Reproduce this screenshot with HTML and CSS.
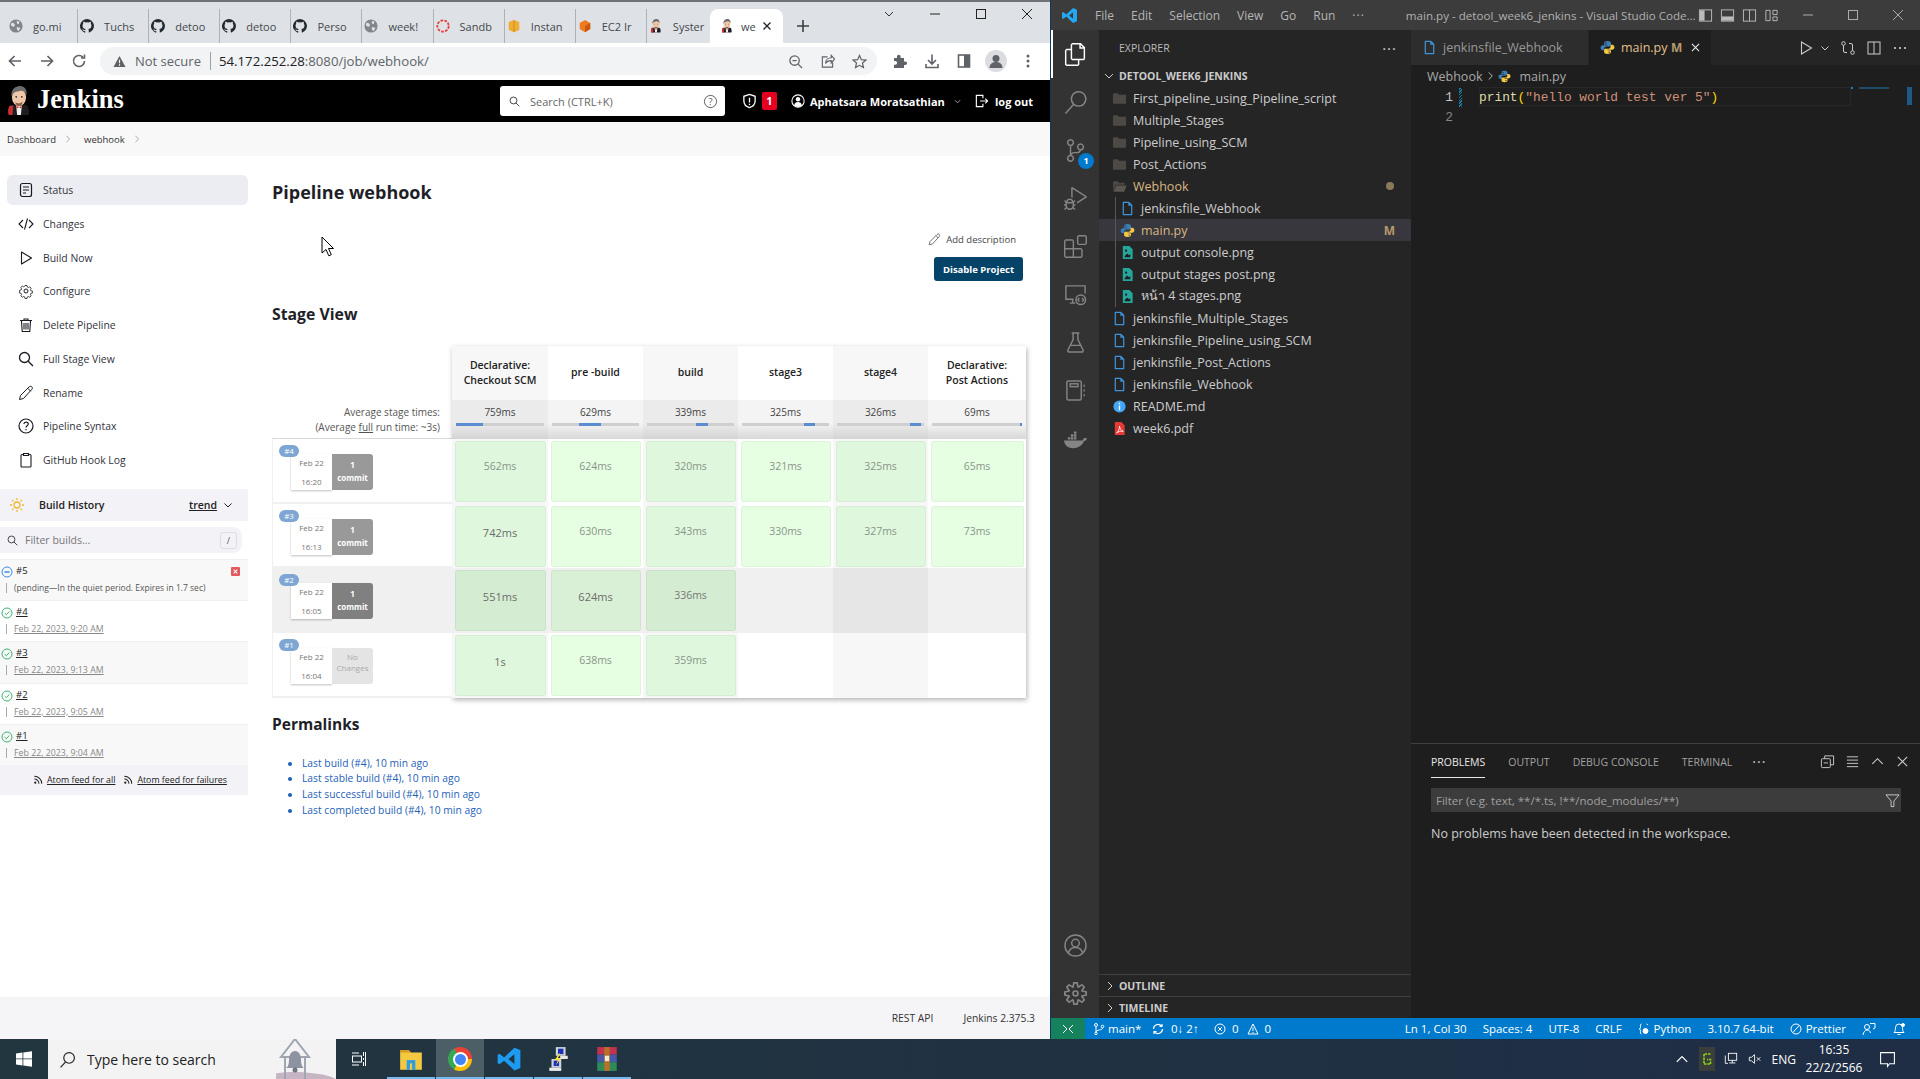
FILE: index.html
```html
<!DOCTYPE html>
<html lang="en">
<head>
<meta charset="utf-8">
<title>Jenkins and VS Code</title>
<link rel="stylesheet" href="styles.css">
</head>
<body>
<svg class="defs" width="0" height="0" aria-hidden="true">
  <symbol id="i-globe" viewBox="0 0 16 16"><circle cx="8" cy="8" r="7.5" fill="#80868b"/><path d="M3 4l3 1 1 2-2 2-3-2zM9 2l3 1-1 3-2-1zM9 9l4 1-2 4-2-2z" fill="#dee1e6"/></symbol>
  <symbol id="i-gh" viewBox="0 0 16 16"><path fill="#24292f" d="M8 0a8 8 0 0 0-2.53 15.59c.4.07.55-.17.55-.38v-1.4c-2.23.48-2.7-1.07-2.7-1.07-.36-.92-.89-1.17-.89-1.17-.73-.5.05-.49.05-.49.8.06 1.23.83 1.23.83.71 1.22 1.87.87 2.33.66.07-.52.28-.87.51-1.07-1.78-.2-3.64-.89-3.64-3.95 0-.87.31-1.59.82-2.15-.08-.2-.36-1.02.08-2.12 0 0 .67-.21 2.2.82a7.6 7.6 0 0 1 4 0c1.53-1.04 2.2-.82 2.2-.82.44 1.1.16 1.92.08 2.12.51.56.82 1.27.82 2.15 0 3.07-1.87 3.75-3.65 3.95.29.25.54.73.54 1.48v2.2c0 .21.15.46.55.38A8 8 0 0 0 8 0z"/></symbol>
  <symbol id="i-jenkins" viewBox="0 0 24 32">
    <path d="M3 20c-3 3-3 8-1 11h20c1-3 1-8-2-11z" fill="#1d1d22"/>
    <path d="M2 21c-2 3-2 7-1 10h4l1-10z" fill="#c8312f"/>
    <path d="M9 21h6l-1 10h-4z" fill="#f3f1ec"/>
    <path d="M9.5 21l2.5 2 2.5-2v3l-2.5-1-2.5 1z" fill="#d33833"/>
    <ellipse cx="12" cy="12" rx="7.5" ry="9.5" fill="#f0c8a8"/>
    <path d="M4 11C3 4 8 0 13 0c5 0 8 4 7 10-1-3-3-5-6-5-3 1-7 1-8 3-1 1-1 2-2 3z" fill="#6d6b6d"/>
    <path d="M8 17c2 2 6 2 8-.5-.5 3-2 5-4 5s-3.5-2-4-4.500z" fill="#8a5a44"/>
    <circle cx="9" cy="11.5" r=".9" fill="#222"/><circle cx="15" cy="11.5" r=".9" fill="#222"/>
  </symbol>
  <symbol id="i-file" viewBox="0 0 16 16"><path d="M3.5 1.500h6l3 3v10h-9z M9.5 1.500v3h3" fill="none" stroke="#3f93d8" stroke-width="1.3" stroke-linejoin="round"/></symbol>
  <symbol id="i-folder" viewBox="0 0 16 16"><path d="M1 3.5l1-1h4l1.5 1.500H14.5l.5.5v8.500l-.5.5h-13l-.5-.5z" fill="#4d4a46"/></symbol>
  <symbol id="i-folder-open" viewBox="0 0 16 16"><path d="M1 3.5l1-1h4l1.5 1.500H13l.5.5V6H4L1.5 13z" fill="#4d4a46"/><path d="M4.5 7H15.5L13 13.5H1.5z" fill="#5b5750"/></symbol>
  <symbol id="i-img" viewBox="0 0 16 16"><path d="M3 1h7l3.5 3.5V15H3z" fill="#26a69a"/><path d="M5 12l2.5-3 2 2 1.5-1.500V13H5z" fill="#1e1e1e"/><circle cx="6.5" cy="6" r="1.2" fill="#1e1e1e"/></symbol>
  <symbol id="i-py" viewBox="0 0 24 24"><path d="M12 1.5c-3.500 0-5.500 1.200-5.500 3.200V7.500H12v1H4.500c-2 0-3.500 1.500-3.500 4s1.500 4 3.200 4H7v-3c0-2 1.400-3.300 3.300-3.300h4.400c1.700 0 2.800-1.100 2.800-2.700V4.700c0-2-2-3.200-5.500-3.200zM9.300 3.500a1.100 1.100 0 1 1 0 2.200 1.100 1.100 0 0 1 0-2.200z" fill="#3c7fb8"/><path transform="rotate(180 12 12)" d="M12 1.5c-3.500 0-5.500 1.200-5.500 3.200V7.500H12v1H4.500c-2 0-3.500 1.500-3.500 4s1.500 4 3.200 4H7v-3c0-2 1.400-3.300 3.300-3.300h4.400c1.700 0 2.800-1.100 2.800-2.700V4.700c0-2-2-3.200-5.500-3.200zM9.300 3.500a1.100 1.100 0 1 1 0 2.200 1.100 1.100 0 0 1 0-2.200z" fill="#f6c944"/></symbol>
  <symbol id="i-ok" viewBox="0 0 12 12"><circle cx="6" cy="6" r="5" fill="none" stroke="#3cb371" stroke-width="1"/><path d="M3.700 6.200l1.600 1.500 3-3.200" fill="none" stroke="#3cb371" stroke-width="1"/></symbol>
  <symbol id="i-rss" viewBox="0 0 12 12"><circle cx="2.5" cy="9.5" r="1.2" fill="#222"/><path d="M1.500 5.500a5 5 0 0 1 5 5M1.500 2.500a8 8 0 0 1 8 8" fill="none" stroke="#222" stroke-width="1.1"/></symbol>
  <symbol id="i-search" viewBox="0 0 16 16"><circle cx="6.5" cy="6.5" r="5" fill="none" stroke="currentColor" stroke-width="1.3"/><path d="M10.200 10.200L15 15" stroke="currentColor" stroke-width="1.3"/></symbol>
  <symbol id="i-pencil" viewBox="0 0 16 16"><path d="M1.500 14.500l1-4L11 2c1-1 2-1 2.800-.2s.8 1.800-.2 2.800L5.500 13.500zM9.800 3.300l2.900 2.900" fill="none" stroke="currentColor" stroke-width="1"/></symbol>
</svg>

<div class="desktop">
  <div class="browser">
    <div class="tabstrip">
      <div class="tab"><svg class="fav"><use href="#i-globe"/></svg><span class="tabname">go.mi</span></div>
      <div class="tab"><svg class="fav"><use href="#i-gh"/></svg><span class="tabname">Tuchs</span></div>
      <div class="tab"><svg class="fav"><use href="#i-gh"/></svg><span class="tabname">detoo</span></div>
      <div class="tab"><svg class="fav"><use href="#i-gh"/></svg><span class="tabname">detoo</span></div>
      <div class="tab"><svg class="fav"><use href="#i-gh"/></svg><span class="tabname">Perso</span></div>
      <div class="tab"><svg class="fav"><use href="#i-globe"/></svg><span class="tabname">week!</span></div>
      <div class="tab"><svg class="fav" viewBox="0 0 16 16"><circle cx="8" cy="8" r="6.5" fill="none" stroke="#e53935" stroke-width="2" stroke-dasharray="3 1.5"/></svg><span class="tabname">Sandb</span></div>
      <div class="tab"><svg class="fav" viewBox="0 0 16 16"><path d="M8 1l6 2.500v9L8 15l-6-2.500v-9z" fill="#f0ad33"/><path d="M8 1v14" stroke="#c98a1e"/></svg><span class="tabname">Instan</span></div>
      <div class="tab"><svg class="fav" viewBox="0 0 16 16"><path d="M8 1l6 3.500v7L8 15l-6-3.500v-7z" fill="#ee7b1d"/><path d="M8 8v7l6-3.500v-7z" fill="#c9590f"/></svg><span class="tabname">EC2 Ir</span></div>
      <div class="tab"><svg class="fav"><use href="#i-jenkins"/></svg><span class="tabname">Syster</span></div>
      <div class="tab tab-active"><svg class="fav"><use href="#i-jenkins"/></svg><span class="tabname tabname-short">we</span>
        <svg class="tabclose" viewBox="0 0 10 10"><path d="M1.500 1.500l7 7M8.500 1.500l-7 7" stroke="#202124" stroke-width="1.3"/></svg>
      </div>
      <svg class="newtab" viewBox="0 0 14 14"><path d="M7 1v12M1 7h12" stroke="#3c4043" stroke-width="1.6"/></svg>
      <div class="winctl">
        <svg viewBox="0 0 12 12"><path d="M2 4l4 4 4-4" fill="none" stroke="#333"/></svg>
        <svg viewBox="0 0 12 12"><path d="M1 6h10" stroke="#222"/></svg>
        <svg viewBox="0 0 12 12"><rect x="1.5" y="1.5" width="9" height="9" fill="none" stroke="#222"/></svg>
        <svg viewBox="0 0 12 12"><path d="M1 1l10 10M11 1L1 11" stroke="#222"/></svg>
      </div>
    </div>
    <div class="toolbar">
      <svg class="navicon" viewBox="0 0 16 16"><path d="M14 8H2.500M7.500 3l-5 5 5 5" fill="none" stroke="#5f6368" stroke-width="1.7"/></svg>
      <svg class="navicon" viewBox="0 0 16 16"><path d="M2 8h11.500M8.500 3l5 5-5 5" fill="none" stroke="#5f6368" stroke-width="1.7"/></svg>
      <svg class="navicon" viewBox="0 0 16 16"><path d="M13.500 8a5.500 5.500 0 1 1-1.600-3.900M13.500 1.500v3.500H10" fill="none" stroke="#5f6368" stroke-width="1.6"/></svg>
      <div class="omnibox">
        <svg class="warn" viewBox="0 0 14 14"><path d="M7 1l6.500 12H.5z" fill="#5f6368"/><path d="M7 5v4M7 10v1.500" stroke="#fff" stroke-width="1.2"/></svg>
        <span class="notsecure">Not secure</span>
        <span class="omni-sep"></span>
        <span class="url">54.172.252.28<span class="url-dim">:8080/job/webhook/</span></span>
        <div class="omni-icons">
          <svg viewBox="0 0 16 16"><circle cx="7" cy="7" r="5" fill="none" stroke="#5f6368" stroke-width="1.4"/><path d="M4.800 7h4.400M10.800 10.800L15 15" stroke="#5f6368" stroke-width="1.4"/></svg>
          <svg viewBox="0 0 16 16"><path d="M8 3H2.500v11h11V9M6 10c0-4 3-6 6-6V1.500L15.500 5.500 12 9.500V7c-3 0-5 1-6 3z" fill="none" stroke="#5f6368" stroke-width="1.2"/></svg>
          <svg viewBox="0 0 16 16"><path d="M8 1.500l2 4.500 4.800.5-3.600 3.200 1 4.800L8 12.100l-4.200 2.400 1-4.800L1.200 6.500 6 6z" fill="none" stroke="#5f6368" stroke-width="1.3"/></svg>
        </div>
      </div>
      <div class="ext-icons">
        <svg viewBox="0 0 16 16"><path d="M2 5h3V3.500a1.800 1.800 0 0 1 3.600 0V5h3.400v3.400h1.300a1.800 1.800 0 0 1 0 3.600H12v3H2v-3.300h1.300a1.800 1.800 0 0 0 0-3.600H2z" fill="#5f6368"/></svg>
        <svg viewBox="0 0 16 16"><path d="M8 1.500v9M4 7l4 4 4-4M2 11v3.500h12V11" fill="none" stroke="#5f6368" stroke-width="1.6"/></svg>
        <svg viewBox="0 0 16 16"><rect x="2.5" y="2" width="11" height="12" fill="none" stroke="#5f6368" stroke-width="1.6"/><rect x="8" y="2" width="5.500" height="12" fill="#5f6368"/></svg>
        <span class="avatar"><svg viewBox="0 0 22 22"><circle cx="11" cy="8.5" r="3.5" fill="#5f6368"/><path d="M4.500 18c0-4 3-6 6.500-6s6.500 2 6.500 6z" fill="#5f6368"/></svg></span>
        <svg viewBox="0 0 16 16"><circle cx="8" cy="3" r="1.5" fill="#5f6368"/><circle cx="8" cy="8" r="1.5" fill="#5f6368"/><circle cx="8" cy="13" r="1.5" fill="#5f6368"/></svg>
      </div>
    </div>

    <header class="jk-header">
      <svg class="jk-logo"><use href="#i-jenkins"/></svg>
      <span class="jk-word">Jenkins</span>
      <div class="jk-search">
        <svg class="jk-search-ic"><use href="#i-search"/></svg>
        <span class="jk-search-text">Search (CTRL+K)</span>
        <svg class="jk-help" viewBox="0 0 16 16"><circle cx="8" cy="8" r="6.5" fill="none" stroke="#555" stroke-width="1"/><text x="8" y="11.5" text-anchor="middle" class="jk-help-q">?</text></svg>
      </div>
      <svg class="jk-shield" viewBox="0 0 16 16"><path d="M8 1l6 2v5c0 3.500-2.500 6-6 7-3.500-1-6-3.500-6-7V3z" fill="none" stroke="#fff" stroke-width="1.4"/><path d="M8 4.500v5M8 10.800v1.500" stroke="#fff" stroke-width="1.4"/></svg>
      <span class="jk-badge">1</span>
      <svg class="jk-user" viewBox="0 0 16 16"><circle cx="8" cy="8" r="7" fill="none" stroke="#fff" stroke-width="1.2"/><circle cx="8" cy="6" r="2.5" fill="#fff"/><path d="M3.500 13c.5-3 2.500-4 4.500-4s4 1 4.500 4L8 15z" fill="#fff"/></svg>
      <span class="jk-name">Aphatsara Moratsathian</span>
      <svg class="jk-caret" viewBox="0 0 10 10"><path d="M2 3.500L5 6.500l3-3" fill="none" stroke="#aaa" stroke-width="1"/></svg>
      <svg class="jk-logout" viewBox="0 0 16 16"><path d="M9.500 5V2h-7v12h7v-3M6.500 8h8M12 5.500L14.500 8 12 10.500" fill="none" stroke="#fff" stroke-width="1.2"/></svg>
      <span class="jk-out">log out</span>
    </header>
    <nav class="crumbs">
      <span>Dashboard</span><svg class="crumb-sep" viewBox="0 0 8 10"><path d="M2 1l4 4-4 4" fill="none" stroke="#999"/></svg>
      <span>webhook</span><svg class="crumb-sep" viewBox="0 0 8 10"><path d="M2 1l4 4-4 4" fill="none" stroke="#999"/></svg>
    </nav>

    <div class="jk-body">
      <aside class="side">
        <ul class="tasks">
          <li class="task task-on"><svg viewBox="0 0 16 16"><rect x="2.5" y="1.5" width="11" height="13" rx="2" fill="none" stroke="#1a1a23" stroke-width="1.2"/><path d="M5 5h6M5 8h6M5 11h3" stroke="#1a1a23" stroke-width="1.1"/></svg>Status</li>
          <li class="task"><svg viewBox="0 0 16 16"><path d="M5 4L1 8l4 4M11 4l4 4-4 4M9.500 2.500l-3 11" fill="none" stroke="#1a1a23" stroke-width="1.1"/></svg>Changes</li>
          <li class="task"><svg viewBox="0 0 16 16"><path d="M3.500 2v12l10-6z" fill="none" stroke="#1a1a23" stroke-width="1.1" stroke-linejoin="round"/></svg>Build Now</li>
          <li class="task"><svg viewBox="0 0 16 16" fill="none" stroke="#1a1a23"><path d="M6.700 1.500h2.600l.4 2 1.200.6 1.800-1 1.800 1.900-1 1.800.5 1.200 2 .4v2.600l-2 .4-.5 1.200 1 1.800-1.800 1.800-1.800-1-1.200.5-.4 2H6.700l-.4-2-1.200-.5-1.800 1-1.800-1.800 1-1.800-.5-1.200-2-.4V7.400l2-.4.5-1.200-1-1.800 1.800-1.900 1.800 1 1.200-.6z" transform="translate(1.600 1.300) scale(.8)"/><circle cx="8" cy="8" r="2"/></svg>Configure</li>
          <li class="task"><svg viewBox="0 0 16 16"><path d="M2 3.500h12M6 3.500V2h4v1.500M3.500 3.500l.7 11h7.600l.7-11M6 6v6.500M8 6v6.500M10 6v6.500" fill="none" stroke="#1a1a23" stroke-width="1.1"/></svg>Delete Pipeline</li>
          <li class="task"><svg class="ic-dark"><use href="#i-search"/></svg>Full Stage View</li>
          <li class="task"><svg class="ic-dark"><use href="#i-pencil"/></svg>Rename</li>
          <li class="task"><svg viewBox="0 0 16 16"><circle cx="8" cy="8" r="7" fill="none" stroke="#1a1a23" stroke-width="1.2"/><path d="M5.800 6.200C6 4.800 7 4.200 8.100 4.200c1.300 0 2.200.8 2.200 1.900 0 1.700-2.300 1.700-2.300 3.400M8 11v1.300" fill="none" stroke="#1a1a23" stroke-width="1.2"/></svg>Pipeline Syntax</li>
          <li class="task"><svg viewBox="0 0 16 16"><path d="M5.500 2.500H4a1 1 0 0 0-1 1v10.500a1 1 0 0 0 1 1h8a1 1 0 0 0 1-1V3.500a1 1 0 0 0-1-1h-1.500M5.500 1.500h5v2h-5z" fill="none" stroke="#1a1a23" stroke-width="1.1"/></svg>GitHub Hook Log</li>
        </ul>

        <div class="bh-head">
          <svg class="bh-sun" viewBox="0 0 16 16"><circle cx="8" cy="8" r="3" fill="none" stroke="#f5b82e" stroke-width="1.3"/><path d="M8 1v2M8 13v2M1 8h2M13 8h2M3 3l1.400 1.400M11.600 11.600L13 13M3 13l1.400-1.400M11.600 4.400L13 3" stroke="#f5b82e" stroke-width="1.3"/></svg>
          <span class="bh-title">Build History</span>
          <span class="bh-trend">trend</span>
          <svg class="bh-caret" viewBox="0 0 10 10"><path d="M1.500 3.500L5 7l3.500-3.500" fill="none" stroke="#222"/></svg>
        </div>
        <div class="bh-filter">
          <svg class="bh-filter-ic"><use href="#i-search"/></svg>
          <span class="bh-filter-text">Filter builds...</span>
          <span class="bh-slash">/</span>
        </div>
        <div class="build build-alt">
          <svg class="build-ic" viewBox="0 0 12 12"><circle cx="6" cy="6" r="5" fill="none" stroke="#3d8be0"/><path d="M3.500 6h5" stroke="#3d8be0" stroke-width="1.5"/></svg>
          <span class="build-no build-no-plain">#5</span>
          <span class="build-x"><svg viewBox="0 0 10 10"><path d="M3 3l4 4M7 3L3 7" stroke="#fff" stroke-width="1.2"/></svg></span>
          <span class="build-sub build-pending">(pending—In the quiet period. Expires in 1.7 sec)</span>
        </div>
        <div class="build"><svg class="build-ic"><use href="#i-ok"/></svg><span class="build-no">#4</span><span class="build-sub">Feb 22, 2023, 9:20 AM</span></div>
        <div class="build build-alt"><svg class="build-ic"><use href="#i-ok"/></svg><span class="build-no">#3</span><span class="build-sub">Feb 22, 2023, 9:13 AM</span></div>
        <div class="build"><svg class="build-ic"><use href="#i-ok"/></svg><span class="build-no">#2</span><span class="build-sub">Feb 22, 2023, 9:05 AM</span></div>
        <div class="build build-alt"><svg class="build-ic"><use href="#i-ok"/></svg><span class="build-no">#1</span><span class="build-sub">Feb 22, 2023, 9:04 AM</span></div>
        <div class="feeds">
          <svg><use href="#i-rss"/></svg><span>Atom feed for all</span>
          <svg><use href="#i-rss"/></svg><span>Atom feed for failures</span>
        </div>
      </aside>

      <main class="content">
        <h1 class="title">Pipeline webhook</h1>
        <div class="actions">
          <div class="adddesc"><svg><use href="#i-pencil"/></svg>Add description</div>
          <button class="disable">Disable Project</button>
        </div>
        <h2 class="h2 h2-stage">Stage View</h2>
        <div class="stage">
          <div class="stage-left">
            <div class="sl-top"></div>
            <div class="sl-avg">Average stage times:<br>(Average <u>full</u> run time: ~3s)</div>
            <div class="sl-row"><span class="bnum">#4</span><div class="bdate"><span>Feb 22</span><span>16:20</span></div><div class="bchg"><b>1</b><b>commit</b></div></div>
            <div class="sl-row"><span class="bnum">#3</span><div class="bdate"><span>Feb 22</span><span>16:13</span></div><div class="bchg"><b>1</b><b>commit</b></div></div>
            <div class="sl-row sl-hover"><span class="bnum">#2</span><div class="bdate"><span>Feb 22</span><span>16:05</span></div><div class="bchg"><b>1</b><b>commit</b></div></div>
            <div class="sl-row"><span class="bnum">#1</span><div class="bdate"><span>Feb 22</span><span>16:04</span></div><div class="bchg bchg-none"><span>No</span><span>Changes</span></div></div>
          </div>
          <div class="stage-table">
            <div class="th odd">Declarative:<br>Checkout SCM</div><div class="th">pre -build</div><div class="th odd">build</div><div class="th">stage3</div><div class="th odd">stage4</div><div class="th">Declarative:<br>Post Actions</div>

            <div class="avg avg-odd">759ms<span class="track"><i style="margin-left:0;width:31%"></i></span></div>
            <div class="avg">629ms<span class="track"><i style="margin-left:31%;width:25%"></i></span></div>
            <div class="avg avg-odd">339ms<span class="track"><i style="margin-left:56%;width:14%"></i></span></div>
            <div class="avg">325ms<span class="track"><i style="margin-left:71%;width:13%"></i></span></div>
            <div class="avg avg-odd">326ms<span class="track"><i style="margin-left:84%;width:13%"></i></span></div>
            <div class="avg">69ms<span class="track"><i style="margin-left:98%;width:2%"></i></span></div>

            <div class="cell"><div class="box box-odd">562ms</div></div><div class="cell"><div class="box">624ms</div></div><div class="cell"><div class="box box-odd">320ms</div></div><div class="cell"><div class="box">321ms</div></div><div class="cell"><div class="box box-odd">325ms</div></div><div class="cell"><div class="box">65ms</div></div>

            <div class="cell"><div class="box box-odd box-big">742ms</div></div><div class="cell"><div class="box">630ms</div></div><div class="cell"><div class="box box-odd">343ms</div></div><div class="cell"><div class="box">330ms</div></div><div class="cell"><div class="box box-odd">327ms</div></div><div class="cell"><div class="box">73ms</div></div>

            <div class="cell cell-h"><div class="box box-hodd box-big">551ms</div></div><div class="cell cell-h"><div class="box box-h box-big">624ms</div></div><div class="cell cell-h"><div class="box box-hodd">336ms</div></div><div class="cell cell-h"></div><div class="cell cell-hd"></div><div class="cell cell-h"></div>

            <div class="cell"><div class="box box-odd box-big">1s</div></div><div class="cell"><div class="box">638ms</div></div><div class="cell"><div class="box box-odd">359ms</div></div><div class="cell"></div><div class="cell cell-l"></div><div class="cell"></div>
          </div>
        </div>
        <h2 class="h2 h2-perma">Permalinks</h2>
        <ul class="perma">
          <li>Last build (#4), 10 min ago</li>
          <li>Last stable build (#4), 10 min ago</li>
          <li>Last successful build (#4), 10 min ago</li>
          <li>Last completed build (#4), 10 min ago</li>
        </ul>
        <svg class="cursor" viewBox="0 0 13 21"><path d="M1 1v16l4-3.500 2.800 6.300 2.500-1.100L7.500 12.500l5 0z" fill="#fff" stroke="#000" stroke-width="1"/></svg>
      </main>
    </div>
    <footer class="jk-foot"><span>REST API</span><span>Jenkins 2.375.3</span></footer>
  </div>

  <div class="code">
    <div class="vs-title">
      <svg class="vs-logo" viewBox="0 0 24 24"><path fill-rule="evenodd" d="M17 1.500L7.500 10.500 3.200 7.200 1.500 8v8l1.700.8 4.300-3.300L17 22.500l5.500-2.300V3.800zM17 7.500L11.500 12l5.500 4.500z" fill="#23a9f2"/></svg>
      <span class="vs-menu">File</span><span class="vs-menu">Edit</span><span class="vs-menu">Selection</span><span class="vs-menu">View</span><span class="vs-menu">Go</span><span class="vs-menu">Run</span><span class="vs-menu vs-more">···</span>
      <span class="vs-wintitle">main.py - detool_week6_jenkins - Visual Studio Code...</span>
      <div class="vs-layout">
        <svg viewBox="0 0 16 16"><rect x="1.5" y="2" width="13" height="12" fill="none" stroke="#bbb"/><rect x="2" y="2.5" width="5" height="11" fill="#bbb"/></svg>
        <svg viewBox="0 0 16 16"><rect x="1.5" y="2" width="13" height="12" fill="none" stroke="#bbb"/><rect x="2" y="9" width="12" height="4.5" fill="#bbb"/></svg>
        <svg viewBox="0 0 16 16"><rect x="1.5" y="2" width="13" height="12" fill="none" stroke="#bbb"/><path d="M8 2v12" stroke="#bbb"/></svg>
        <svg viewBox="0 0 16 16"><path d="M2 2.500h4.500v11H2zM9.500 2.500H14v4.500H9.500zM9.500 9.500H14V13.500H9.500z" fill="none" stroke="#bbb"/></svg>
      </div>
      <div class="vs-winctl">
        <svg viewBox="0 0 12 12"><path d="M1 6h10" stroke="#aaa"/></svg>
        <svg viewBox="0 0 12 12"><rect x="1.5" y="1.5" width="9" height="9" fill="none" stroke="#aaa"/></svg>
        <svg viewBox="0 0 12 12"><path d="M1 1l10 10M11 1L1 11" stroke="#aaa"/></svg>
      </div>
    </div>
    <div class="vs-main">
      <div class="vs-activity">
        <div class="act act-on"><svg viewBox="0 0 24 24"><path fill="#fff" d="M17.500 0h-9L7 1.500V6H2.500L1 7.500v15.070L2.500 24h12.070L16 22.570V18h4.700l1.300-1.430V4.500L17.500 0zm0 2.120l2.380 2.380H17.500V2.120zm-3 20.380h-12v-15H7v9.070L8.500 18h6v4.500zm6-6h-12v-15H16V6h4.500v10.500z"/></svg></div>
        <div class="act"><svg viewBox="0 0 24 24"><path fill="#858585" d="M15.250 0a8.250 8.250 0 0 0-6.180 13.720L1 22.880l1.120 1 8.050-9.120A8.251 8.251 0 1 0 15.250.01V0zm0 15a6.750 6.750 0 1 1 0-13.500 6.750 6.750 0 0 1 0 13.500z"/></svg></div>
        <div class="act"><svg viewBox="0 0 24 24"><path fill="#858585" d="M21.007 8.222A3.738 3.738 0 0 0 15.045 5.200a3.737 3.737 0 0 0 1.156 6.583 2.988 2.988 0 0 1-2.668 1.670h-2.990a4.456 4.456 0 0 0-2.989 1.165V7.400a3.737 3.737 0 1 0-1.494 0v9.117a3.776 3.776 0 1 0 1.816.099 2.990 2.990 0 0 1 2.668-1.667h2.990a4.484 4.484 0 0 0 4.223-3.039 3.736 3.736 0 0 0 3.250-3.687zM4.565 3.738a2.242 2.242 0 1 1 4.484 0 2.242 2.242 0 0 1-4.484 0zm4.484 16.441a2.242 2.242 0 1 1-4.484 0 2.242 2.242 0 0 1 4.484 0zm8.221-9.715a2.242 2.242 0 1 1 0-4.485 2.242 2.242 0 0 1 0 4.485z"/></svg><span class="act-badge">1</span></div>
        <div class="act"><svg viewBox="0 0 24 24"><path fill="#858585" d="M10.940 13.500l-1.320 1.320a3.730 3.730 0 0 0-7.240 0L1.060 13.500 0 14.560l1.720 1.720-.22.220V18H0v1.500h1.500v.08c.077.489.214.966.41 1.420L0 22.940 1.060 24l1.650-1.650A4.308 4.308 0 0 0 6 24a4.310 4.310 0 0 0 3.290-1.650L10.940 24 12 22.940 10.090 21c.198-.464.336-.951.41-1.450v-.1H12V18h-1.500v-1.500l-.22-.22L12 14.560l-1.060-1.060zM6 13.500a2.250 2.250 0 0 1 2.250 2.250h-4.500A2.250 2.250 0 0 1 6 13.500zm3 6a3.330 3.330 0 0 1-3 3 3.330 3.330 0 0 1-3-3v-2.250h6v2.250zm14.760-9.900v1.260L13.500 17.370V15.600l8.500-5.370L9 2v9.460a5.070 5.070 0 0 0-1.500-.72V.63L8.640 0l15.120 9.600z"/></svg></div>
        <div class="act"><svg viewBox="0 0 24 24"><path fill="#858585" d="M13.500 1.500L15 0h7.500L24 1.500V9l-1.500 1.500H15L13.500 9V1.500zm1.500 0V9h7.500V1.500H15zM0 15V6l1.500-1.500H9L10.500 6v7.500H18l1.500 1.500v7.500L18 24H1.500L0 22.500V15zm9-1.500V6H1.500v7.500H9zM9 15H1.500v7.500H9V15zm1.500 7.500H18V15h-7.500v7.500z"/></svg></div>
        <div class="act"><svg viewBox="0 0 24 24" fill="none" stroke="#858585" stroke-width="1.5"><path d="M10 17H2V3h20v8M6 21h6M9 17v4"/><circle cx="17.5" cy="17.5" r="5"/><path d="M16 15.500L14.500 17.500 16 19.500M19 15.500L20.500 17.500 19 19.500"/></svg></div>
        <div class="act"><svg viewBox="0 0 24 24" fill="none" stroke="#858585" stroke-width="1.5"><path d="M8 2h8M9.500 2v7L4 20a1.500 1.500 0 0 0 1.500 2h13a1.500 1.500 0 0 0 1.500-2L14.500 9V2M7 15h10"/></svg></div>
        <div class="act"><svg viewBox="0 0 24 24" fill="none" stroke="#858585" stroke-width="1.5"><rect x="3" y="2" width="15" height="20" rx="1.5"/><rect x="6.5" y="5" width="8" height="3"/><path d="M21 6v2M21 11v2M21 16v2"/></svg></div>
        <div class="act act-last"><svg viewBox="0 0 24 24"><path fill="#858585" d="M0 12h19.500c.5-2 1.800-3 2.500-3l2 1c-.5 1.500-1.500 2.500-3 2.500C19 17 15 20 9.500 20 3.500 20 .5 16.500 0 12z"/><path fill="#858585" d="M4 8.500h2.600V11H4zM7.200 8.500h2.600V11H7.200zM10.400 8.500H13V11h-2.600zM7.200 5.500h2.600V8H7.200zM10.400 5.500H13V8h-2.600zM10.400 2.500H13V5h-2.600z"/></svg></div>
        <div class="act-spacer"></div>
        <div class="act"><svg viewBox="0 0 24 24" fill="none" stroke="#858585" stroke-width="1.5"><circle cx="12" cy="12" r="11"/><circle cx="12" cy="9.5" r="4"/><path d="M4.500 20c1-4 4-6 7.500-6s6.500 2 7.500 6"/></svg></div>
        <div class="act act-gear"><svg viewBox="0 0 24 24"><path fill="#858585" d="M19.850 8.750l4.150.83v4.840l-4.150.83 2.350 3.520-3.430 3.430-3.520-2.350-.83 4.150H9.580l-.83-4.150-3.520 2.350-3.430-3.430 2.350-3.520L0 14.420V9.580l4.150-.83L1.800 5.230 5.230 1.800l3.520 2.350L9.580 0h4.840l.83 4.150 3.520-2.350 3.430 3.430-2.350 3.520zm-1.570 5.070l4-.81v-2l-4-.81-.54-1.300 2.290-3.430-1.430-1.430-3.430 2.290-1.300-.54-.81-4h-2l-.81 4-1.300.54-3.430-2.290-1.430 1.430L6.380 8.900l-.54 1.300-4 .81v2l4 .81.54 1.300-2.290 3.430 1.430 1.430 3.430-2.290 1.300.54.81 4h2l.81-4 1.300-.54 3.430 2.290 1.430-1.430-2.290-3.430.54-1.300zM12 8.570a3.430 3.430 0 1 1 0 6.860 3.430 3.430 0 0 1 0-6.860zm0 1.700a1.710 1.710 0 1 0 0 3.420 1.710 1.710 0 0 0 0-3.420z"/></svg></div>
      </div>

      <div class="vs-side">
        <div class="ex-head"><span>EXPLORER</span><span class="ex-dots">···</span></div>
        <div class="ex-root"><svg class="chev" viewBox="0 0 10 10"><path d="M1 3l4 4 4-4" fill="none" stroke="#ccc"/></svg>DETOOL_WEEK6_JENKINS</div>
        <div class="tree">
          <div class="row"><svg class="ric"><use href="#i-folder"/></svg>First_pipeline_using_Pipeline_script</div>
          <div class="row"><svg class="ric"><use href="#i-folder"/></svg>Multiple_Stages</div>
          <div class="row"><svg class="ric"><use href="#i-folder"/></svg>Pipeline_using_SCM</div>
          <div class="row"><svg class="ric"><use href="#i-folder"/></svg>Post_Actions</div>
          <div class="row row-mod"><svg class="ric"><use href="#i-folder-open"/></svg>Webhook<span class="row-dot"></span></div>
          <div class="nest">
            <div class="row row-in"><svg class="ric"><use href="#i-file"/></svg>jenkinsfile_Webhook</div>
            <div class="row row-in row-sel row-mod"><svg class="ric"><use href="#i-py"/></svg>main.py<span class="row-m">M</span></div>
            <div class="row row-in"><svg class="ric"><use href="#i-img"/></svg>output console.png</div>
            <div class="row row-in"><svg class="ric"><use href="#i-img"/></svg>output stages post.png</div>
            <div class="row row-in"><svg class="ric"><use href="#i-img"/></svg>หน้า 4 stages.png</div>
          </div>
          <div class="row"><svg class="ric"><use href="#i-file"/></svg>jenkinsfile_Multiple_Stages</div>
          <div class="row"><svg class="ric"><use href="#i-file"/></svg>jenkinsfile_Pipeline_using_SCM</div>
          <div class="row"><svg class="ric"><use href="#i-file"/></svg>jenkinsfile_Post_Actions</div>
          <div class="row"><svg class="ric"><use href="#i-file"/></svg>jenkinsfile_Webhook</div>
          <div class="row"><svg class="ric" viewBox="0 0 16 16"><circle cx="8" cy="8" r="6.5" fill="#42a5f5"/><path d="M8 4v1.500M8 7v5" stroke="#fff" stroke-width="1.5"/></svg>README.md</div>
          <div class="row"><svg class="ric" viewBox="0 0 16 16"><path d="M3 1h7l3.500 3.500V15H3z" fill="#e53935"/><path d="M5 12.500c2-1.500 3-4 3-7 .5 3 2 5 4 5.500-3-.5-5 .5-7 1.500z" fill="none" stroke="#fff" stroke-width=".9"/></svg>week6.pdf</div>
        </div>
        <div class="ex-sect ex-outline"><svg viewBox="0 0 10 10"><path d="M3 1l4 4-4 4" fill="none" stroke="#ccc"/></svg>OUTLINE</div>
        <div class="ex-sect"><svg viewBox="0 0 10 10"><path d="M3 1l4 4-4 4" fill="none" stroke="#ccc"/></svg>TIMELINE</div>
      </div>

      <div class="vs-editor">
        <div class="vs-tabs">
          <div class="vtab"><svg class="vtab-ic"><use href="#i-file"/></svg>jenkinsfile_Webhook</div>
          <div class="vtab vtab-on"><svg class="vtab-ic"><use href="#i-py"/></svg><span class="vtab-name">main.py</span><span class="vtab-m">M</span><svg class="vtab-x" viewBox="0 0 10 10"><path d="M1 1l8 8M9 1L1 9" stroke="#eee" stroke-width="1.2"/></svg></div>
          <div class="vtab-actions">
            <svg viewBox="0 0 16 16"><path d="M3.500 2v12l10-6z" fill="none" stroke="#ccc" stroke-width="1.1"/></svg>
            <svg class="vta-small" viewBox="0 0 10 10"><path d="M1.500 3.500L5 7l3.500-3.500" fill="none" stroke="#ccc"/></svg>
            <svg viewBox="0 0 16 16" fill="none" stroke="#ccc"><circle cx="3.5" cy="3.5" r="1.8"/><circle cx="12.5" cy="12.5" r="1.8"/><path d="M3.500 5.500V11a1.500 1.500 0 0 0 1.500 1.500h2M12.500 10.500V5A1.500 1.500 0 0 0 11 3.500H9"/></svg>
            <svg viewBox="0 0 16 16"><rect x="2" y="2" width="12" height="12" fill="none" stroke="#ccc"/><path d="M8 2v12" stroke="#ccc"/></svg>
            <svg viewBox="0 0 16 16"><circle cx="3" cy="8" r="1.1" fill="#ccc"/><circle cx="8" cy="8" r="1.1" fill="#ccc"/><circle cx="13" cy="8" r="1.1" fill="#ccc"/></svg>
          </div>
        </div>
        <div class="vs-crumb">Webhook<svg class="vc-sep" viewBox="0 0 10 10"><path d="M3 1l4 4-4 4" fill="none" stroke="#ccc"/></svg><svg class="vc-py"><use href="#i-py"/></svg>main.py</div>
        <div class="vs-codearea">
          <div class="cl"><span class="ln ln-on">1</span><span class="gutter"></span><span class="src"><span class="fn">print</span><span class="br">(</span><span class="str">"hello world test ver 5"</span><span class="br">)</span></span></div>
          <div class="cl"><span class="ln">2</span></div>
          <span class="ruler"></span>
          <span class="ov-dot"></span>
          <span class="ov-line"></span>
          <span class="scroll-mark"></span>
        </div>
        <div class="vs-panel">
          <div class="p-tabs">
            <span class="p-tab p-on">PROBLEMS</span><span class="p-tab">OUTPUT</span><span class="p-tab">DEBUG CONSOLE</span><span class="p-tab">TERMINAL</span><span class="p-more">···</span>
            <div class="p-icons">
              <svg viewBox="0 0 16 16" fill="none" stroke="#ccc"><rect x="1.5" y="5" width="9.5" height="9.5" rx="1"/><path d="M5 5V2h9.500v9.500H11M4 9.500h4.500"/></svg>
              <svg viewBox="0 0 16 16"><path d="M2 3h12M2 6.500h12M2 10h12M2 13.500h12" stroke="#ccc"/></svg>
              <svg viewBox="0 0 16 16"><path d="M2.500 10.500L8 5l5.500 5.500" fill="none" stroke="#ccc" stroke-width="1.2"/></svg>
              <svg viewBox="0 0 16 16"><path d="M3 3l10 10M13 3L3 13" stroke="#ccc" stroke-width="1.2"/></svg>
            </div>
          </div>
          <div class="p-filter"><span>Filter (e.g. text, **/*.ts, !**/node_modules/**)</span><svg viewBox="0 0 16 16"><path d="M1 2h14L9.500 8.500V14.500h-3V8.500z" fill="none" stroke="#ccc"/></svg></div>
          <div class="p-msg">No problems have been detected in the workspace.</div>
        </div>
      </div>
    </div>
    <div class="vs-status">
      <span class="st-remote"><svg viewBox="0 0 12 12"><path d="M1 10L5 6 1 2M11 2L7 6l4 4" fill="none" stroke="#fff" stroke-width="1"/></svg></span>
      <span class="st st-branch"><svg viewBox="0 0 12 12" fill="none" stroke="#fff"><circle cx="3" cy="2" r="1.5"/><circle cx="3" cy="10.5" r="1.2"/><circle cx="9.5" cy="3.5" r="1.3"/><path d="M3 3.500V9M9.500 5c0 2.500-6.500 1.500-6.500 4"/></svg>main*</span>
      <span class="st st-sync"><svg viewBox="0 0 12 12" fill="none" stroke="#fff" stroke-width="1.2"><path d="M1.500 6a4.500 4.500 0 0 1 8-2.800M10.500 6a4.500 4.500 0 0 1-8 2.800M10 1v2.500H7.500M2 11V8.500h2.500"/></svg>0↓ 2↑</span>
      <span class="st st-err"><svg viewBox="0 0 12 12" fill="none" stroke="#fff"><circle cx="6" cy="6" r="5"/><path d="M4 4l4 4M8 4L4 8"/></svg>0<svg class="st-warn" viewBox="0 0 12 12" fill="none" stroke="#fff"><path d="M6 1l5 10H1zM6 4.500v3.500M6 9v1"/></svg>0</span>
      <span class="st-right">
        <span>Ln 1, Col 30</span><span>Spaces: 4</span><span>UTF-8</span><span>CRLF</span>
        <span class="st-lang"><svg viewBox="0 0 12 12" fill="none" stroke="#fff"><path d="M3.500 1C2 1 2.500 3 2.500 4.500S1 6 1 6s1.500 0 1.500 1.500S2 11 3.500 11M8.500 1c.8 0 1.200.5 1.200 1"/><circle cx="7.5" cy="8" r="2.5" fill="#fff"/></svg>Python</span>
        <span>3.10.7 64-bit</span>
        <span class="st-lang"><svg viewBox="0 0 12 12" fill="none" stroke="#fff"><circle cx="6" cy="6" r="5"/><path d="M3 9.500l6-7"/></svg>Prettier</span>
        <svg class="st-ic" viewBox="0 0 14 14" fill="none" stroke="#fff"><circle cx="5" cy="5" r="2.5"/><path d="M1 13c.5-3 2-5 4-5s3 1 3.500 3M8 1.500h5V6l-2 1"/></svg>
        <svg class="st-ic" viewBox="0 0 14 14" fill="none" stroke="#fff"><path d="M2 10.500c1-1 1.500-2 1.500-5a3.500 3.500 0 0 1 7 0c0 3 .5 4 1.500 5z"/><path d="M5.500 12.500h3"/><circle cx="11" cy="3" r="1.5" fill="#fff"/></svg>
      </span>
    </div>
  </div>
</div>

<div class="taskbar">
  <svg class="tb-start" viewBox="0 0 16 16"><path d="M0 2.400l6.500-.9v6H0zM7.300 1.400L16 .2v7.300H7.300zM0 8.300h6.500v6.200L0 13.600zM7.300 8.300H16v7.500l-8.700-1.200z" fill="#fff"/></svg>
  <div class="tb-search">
    <svg class="tb-search-ic" viewBox="0 0 16 16"><circle cx="9.5" cy="6.5" r="5" fill="none" stroke="#222" stroke-width="1.1"/><path d="M6 10.500L1.500 15.500" stroke="#222" stroke-width="1.1"/></svg>
    <span>Type here to search</span>
    <svg class="tb-bell" viewBox="11 0 60 40"><path d="M-5 40c8-6 23-7 35-7s32 2 41 7z" fill="#c6b5c2"/><path d="M30 0L16 18h28z M20 18v22M40 18v22" fill="none" stroke="#9fa6b2" stroke-width="2"/><path d="M30 12c-4 0-6 4-6 9 0 4-1 7-3 8h18c-2-1-3-4-3-8 0-5-2-9-6-9z" fill="#8d93a0"/><circle cx="30" cy="31" r="2.5" fill="#6f7480"/></svg>
  </div>
  <svg class="tb-taskview" viewBox="0 0 16 16"><path d="M1 2h7M1 14h7" stroke="#fff"/><rect x="1.5" y="5" width="9" height="6" fill="none" stroke="#fff"/><path d="M12.500 1v4M12.500 7v2M12.500 11v4M14.500 1v14" stroke="#fff"/></svg>
  <div class="tb-app"><svg viewBox="0 0 24 24"><path d="M2 4h8l2 2h10v16H2z" fill="#f5c842"/><path d="M2 4h8l2 2H2z" fill="#d99a1e"/><rect x="8" y="13" width="8" height="9" fill="#2d9fe0"/><rect x="11" y="16" width="2" height="6" fill="#f5c842"/></svg></div>
  <div class="tb-app tb-app-on"><span class="chrome"><span class="chrome-in"></span></span></div>
  <div class="tb-app"><svg viewBox="0 0 24 24"><path fill-rule="evenodd" d="M17 1.500L7.500 10.500 3.200 7.200 1.500 8v8l1.700.8 4.300-3.300L17 22.500l5.500-2.300V3.800zM17 7.500L11.500 12l5.500 4.500z" fill="#1d9bf0"/></svg></div>
  <div class="tb-app"><svg viewBox="0 0 24 24"><rect x="10" y="1" width="9" height="8" fill="#cfd3da"/><rect x="12" y="2.5" width="5" height="5" fill="#1c2fb8"/><rect x="6" y="12" width="9" height="8" fill="#cfd3da"/><rect x="8" y="13.5" width="5" height="5" fill="#1c2fb8"/><rect x="4" y="20" width="11" height="3" fill="#e8e8e8"/><rect x="14" y="9" width="7" height="3" fill="#e8e8e8"/><path d="M13 7l-4 6h3l-2 5 5-7h-3l2-4z" fill="#f6e13a"/></svg></div>
  <div class="tb-app"><svg viewBox="0 0 24 24"><rect x="3" y="1" width="18" height="7" fill="#c2314d"/><rect x="3" y="8" width="18" height="7" fill="#4758a8"/><rect x="3" y="15" width="18" height="8" fill="#2e8b57"/><rect x="9.5" y="1" width="5" height="22" fill="#b5712a"/><rect x="10" y="9" width="4" height="5" fill="#f3e9d0"/></svg></div>
  <div class="tray">
    <svg class="tr-ic" viewBox="0 0 12 12"><path d="M1.500 8.500L6 4l4.500 4.500" fill="none" stroke="#fff"/></svg>
    <span class="tr-g"><svg viewBox="0 0 12 16"><path d="M9.500 3H3v10h6.500V8.500H6" fill="none" stroke="#8fd11a" stroke-width="1.6" stroke-dasharray="2.5 .8"/></svg></span>
    <svg class="tr-ic" viewBox="0 0 16 16" fill="none" stroke="#fff"><rect x="5" y="1.5" width="9.5" height="8"/><path d="M9.500 9.500v3M6 12.500h7M1.500 4v9h3"/></svg>
    <svg class="tr-ic" viewBox="0 0 16 16" fill="none" stroke="#fff"><path d="M1.500 6v4h2.500l3.500 3V3L4 6zM10 6l4 4M14 6l-4 4"/></svg>
    <span class="tr-lang">ENG</span>
    <span class="tr-clock"><span>16:35</span><span>22/2/2566</span></span>
    <svg class="tr-note" viewBox="0 0 16 16"><path d="M1.500 1.500h13v10.500H10l-2 2.500V12H1.500z" fill="none" stroke="#fff"/></svg>
  </div>
</div>
</body>
</html>
```

FILE: styles.css
```css
* { box-sizing: border-box; }
html, body { margin: 0; padding: 0; }
body { width: 1920px; height: 1079px; overflow: hidden; font-family: "Open Sans", "Noto Sans", sans-serif; background: #1f2f40; }
ul { list-style: none; margin: 0; padding: 0; }
svg { display: block; flex: none; }
.defs { position: absolute; }
.desktop { display: flex; height: 1039px; }

/* Browser window */
.browser { width: 1050px; height: 1039px; display: flex; flex-direction: column; background: #fff; }
.tabstrip { height: 43px; flex: none; background: #dee1e6; border-top: 2px solid #6f7276; display: flex; align-items: center; padding: 7px 0 0 7px; }
.tab { width: 71.1px; height: 34px; display: flex; align-items: center; padding-left: 2px; position: relative; border-right: 1px solid #aeb1b6; }
.fav { width: 14px; height: 14px; margin-right: 10px; }
.tabname { white-space: nowrap; font-size: 11px; color: #45484c; }
.tab-active { width: 73px; margin-left: -8px; padding-left: 10px; height: 34px; background: #fff; border: 0; border-radius: 8px 8px 0 0; }
.tab-active .fav { margin-right: 7px; }
.tabname-short { width: 15px; flex: none; }
.tabclose { width: 10px; height: 10px; margin-left: 6px; }
.newtab { width: 14px; height: 14px; margin-left: 13px; }
.winctl { margin-left: auto; display: flex; align-items: flex-start; align-self: flex-start; gap: 34px; padding: 0 17px 0 0; margin-top: -1px; }
.winctl svg { width: 12px; height: 12px; }
.toolbar { height: 37px; flex: none; display: flex; align-items: center; padding-left: 7px; background: #fff; border-bottom: 1px solid #fff; }
.navicon { width: 16px; height: 16px; margin-right: 16px; }
.omnibox { width: 777px; height: 28px; margin-left: -3px; border-radius: 14px; background: #f1f3f4; display: flex; align-items: center; padding-left: 13px; }
.warn { width: 13px; height: 13px; margin-right: 9px; }
.notsecure { font-size: 13px; color: #5f6368; width: 67px; white-space: nowrap; }
.omni-sep { width: 1px; height: 18px; background: #9aa0a6; margin: 0 8px 0 8px; }
.url { font-size: 13.2px; color: #202124; white-space: nowrap; }
.url-dim { color: #5f6368; }
.omni-icons { margin-left: auto; display: flex; gap: 17px; padding-right: 10px; }
.omni-icons svg { width: 15px; height: 15px; }
.ext-icons { display: flex; align-items: center; margin-left: 15px; gap: 16px; }
.ext-icons svg { width: 16px; height: 16px; }
.avatar { width: 22px; height: 22px; border-radius: 50%; background: #dadce0; margin: 0 -3px; }
.avatar svg { width: 22px; height: 22px; }

/* Jenkins */
.jk-header { height: 42px; flex: none; background: #000; display: flex; align-items: center; color: #fff; padding-left: 7px; }
.jk-logo { width: 24px; height: 30px; }
.jk-word { font-family: "Liberation Serif", serif; font-weight: 700; font-size: 26.5px; line-height: 30px; margin: 0 0 4px 6px; width: 463px; flex: none; }
.jk-search { width: 225px; height: 30px; flex: none; background: #fff; border-radius: 3px; display: flex; align-items: center; padding-left: 9px; color: #333; }
.jk-search-ic { width: 11px; height: 11px; }
.jk-search-text { font-size: 11px; color: #666; margin-left: 10px; flex: 1; }
.jk-help { width: 15px; height: 15px; margin-right: 7px; }
.jk-help-q { font-size: 10px; fill: #555; }
.jk-shield { width: 15px; height: 16px; margin-left: 17px; }
.jk-badge { width: 15px; height: 18px; background: #e6001f; border-radius: 2px; font-size: 11px; font-weight: 700; text-align: center; line-height: 18px; margin-left: 5px; }
.jk-user { width: 14px; height: 14px; margin-left: 14px; }
.jk-name { font-size: 11px; font-weight: 700; margin-left: 5px; width: 141px; white-space: nowrap; }
.jk-caret { width: 9px; height: 9px; margin-left: 2px; }
.jk-logout { width: 15px; height: 16px; margin-left: 12px; }
.jk-out { font-size: 11px; font-weight: 700; margin-left: 6px; white-space: nowrap; }
.crumbs { height: 34px; flex: none; background: #f8f8f8; display: flex; align-items: center; padding-left: 7px; font-size: 9.5px; color: #333; }
.crumb-sep { width: 8px; height: 8px; margin: 0 12px 0 8px; }

.jk-body { flex: 1; display: flex; min-height: 0; }
.side { width: 248px; padding-top: 19px; flex: none; }
.tasks { padding: 0 0 0 7px; margin-bottom: 14px; }
.task { height: 30px; margin-bottom: 3.75px; border-radius: 6px; display: flex; align-items: center; padding-left: 11px; font-size: 10.4px; color: #33333d; }
.task svg { width: 16px; height: 16px; margin-right: 9px; }
.ic-dark { color: #1a1a23; }
.task-on { background: #ecedf2; }
.bh-head { height: 32px; background: #f2f2f7; display: flex; align-items: center; padding-left: 9px; }
.bh-sun { width: 16px; height: 16px; }
.bh-title { font-size: 10.5px; font-weight: 600; color: #222; margin-left: 14px; width: 150px; }
.bh-trend { font-size: 10.5px; font-weight: 600; color: #222; text-decoration: underline; }
.bh-caret { width: 10px; height: 10px; margin-left: 6px; }
.bh-filter { width: 242px; height: 26px; margin: 6px 0; background: #f2f2f7; border-radius: 0 9px 9px 0; display: flex; align-items: center; padding-left: 7px; color: #333; }
.bh-filter-ic { width: 11px; height: 11px; }
.bh-filter-text { font-size: 10.5px; color: #777; margin-left: 7px; flex: 1; }
.bh-slash { width: 17px; height: 17px; border: 1px solid #dcdce6; border-radius: 3px; font-size: 9px; text-align: center; line-height: 15px; color: #555; margin-right: 5px; }
.build { height: 41.2px; position: relative; display: grid; grid-template-columns: 16px 1fr; grid-template-rows: 18px 17px; padding-top: 2px; border-top: 1px solid #f0f0f0; }
.build-alt { background: #f8f8f8; }
.build-ic { width: 12px; height: 12px; margin: 4px 0 0 1px; }
.build-no { font-size: 9.5px; color: #222; text-decoration: underline; line-height: 18px; }
.build-no-plain { text-decoration: none; }
.build-sub { grid-column: 1 / 3; font-size: 8.8px; color: #888; text-decoration: underline; line-height: 16px; padding-left: 14px; white-space: nowrap; position: relative; }
.build-sub::before { content: ""; position: absolute; left: 6px; top: 3px; width: 1px; height: 10px; background: #aaa; }
.build-pending { color: #555; text-decoration: none; font-size: 8.5px; }
.build-x { position: absolute; right: 8px; top: 7px; width: 9px; height: 9px; background: #e05a5f; border-radius: 1px; }
.build-x svg { width: 9px; height: 9px; }
.feeds { height: 30px; background: #f2f2f7; display: flex; align-items: center; padding-left: 33px; font-size: 8.8px; color: #222; }
.feeds span { text-decoration: underline; }
.feeds svg { width: 11px; height: 11px; margin-right: 3px; }
.feeds span + svg { margin-left: 8px; }

.content { flex: 1; padding: 24px 15px 0 24px; position: relative; }
.title { margin: 0; font-size: 18px; line-height: 24px; font-weight: 700; color: #1f1f29; }
.actions { margin-top: 27px; display: flex; flex-direction: column; align-items: flex-end; }
.adddesc { display: flex; align-items: center; height: 16px; font-size: 9.5px; color: #444; padding-right: 19px; }
.adddesc svg { width: 13px; height: 13px; margin-right: 5px; color: #555; }
.disable { margin: 10px 12px 0 0; width: 89px; height: 24px; border: 0; border-radius: 3px; background: #064368; color: #fff; font: 700 9.5px "Open Sans", sans-serif; padding: 0; }
.h2 { margin: 0; font-size: 15.8px; line-height: 22px; font-weight: 700; color: #1f1f29; }
.h2-stage { margin-top: 22px; }
.h2-perma { margin-top: 15px; font-size: 15.5px; }
.stage { display: flex; margin-top: 21px; }
.stage-left { width: 180px; flex: none; }
.sl-top { height: 54px; }
.sl-avg { height: 39px; text-align: right; font-size: 10px; line-height: 15px; color: #555; padding: 5px 12px 0 0; border-bottom: 1px solid #d8d8d8; white-space: nowrap; }
.sl-row { height: 64.67px; border: 1px solid #f0f0f0; border-width: 0 0 2px 1px; position: relative; display: flex; padding: 15px 0 0 18px; background: #fff; }
.sl-hover { background: #f0f0f0; }
.bnum { position: absolute; left: 6px; top: 6px; width: 20px; height: 12px; border-radius: 6px; background: #7da6d2; color: #fff; font-size: 8px; line-height: 12px; text-align: center; z-index: 1; }
.bdate { width: 41px; height: 36px; background: #fff; box-shadow: 0 1px 2px rgba(0,0,0,.25); display: flex; flex-direction: column; justify-content: space-between; align-items: center; padding: 3px 0 2px; font-size: 8px; color: #777; line-height: 12px; }
.bchg { width: 41px; height: 36px; background: #999; border-radius: 0 3px 3px 0; display: flex; flex-direction: column; align-items: center; padding-top: 4px; color: #fff; font-size: 8px; line-height: 13px; }
.sl-hover .bchg { background: #808080; }
.bchg-none { background: #e4e4e4; color: #aaa; font-size: 8px; line-height: 11px; padding-top: 3px; }
.stage-table { display: grid; grid-template-columns: 96px 95px 95px 95px 95px 98px; grid-template-rows: 54px 39px repeat(4, 64.67px); box-shadow: 1px 2px 5px rgba(0,0,0,.3); }
.th { display: flex; align-items: center; justify-content: center; text-align: center; font-size: 10.5px; line-height: 15px; font-weight: 600; color: #222; background: #fff; padding-bottom: 1px; }
.th.odd { background: #f7f7f7; }
.avg { background: linear-gradient(#f4f4f4 60%, #d8d8d8); text-align: center; font-size: 10px; color: #444; padding-top: 5px; line-height: 15px; padding-left: 4px; padding-right: 4px; }
.avg-odd { background: linear-gradient(#ebebeb 60%, #d4d4d4); }
.track { display: block; height: 3px; margin-top: 3px; background: #cfcfcf; }
.track i { display: block; height: 3px; background: #5b8bd0; }
.cell { padding: 2px 2.5px 0; background: #f7f7f7; }
.cell:nth-of-type(even) { background: #fff; }
.cell.cell-l { background: #f7f7f7; }
.cell.cell-h { background: #f0f0f0; }
.cell.cell-hd { background: #e6e6e6; }
.box { height: 61px; border: 1px solid rgba(0,0,0,.045); border-radius: 3px; background: #e6ffe3; text-align: center; font-size: 10.5px; color: #8a948a; padding-top: 17px; line-height: 15px; }
.box-odd { background: #dff8dd; }
.box-h { background: #d9f0d6; color: #777; }
.box-hodd { background: #d4edd2; color: #777; }
.box-big { font-size: 11px; color: #6c6c6c; padding-top: 18px; }
.perma { margin-top: 21px; padding-left: 16px; list-style: disc; font-size: 10.3px; line-height: 15.67px; color: #1f5fb8; }
.perma li::marker { color: #1f5fb8; }
.perma li { margin-left: 14px; }
.cursor { position: absolute; left: 73px; top: 80px; width: 13px; height: 21px; }
.jk-foot { height: 42px; flex: none; background: #f5f5f7; display: flex; justify-content: flex-end; align-items: center; gap: 30px; padding-right: 15px; font-size: 10.3px; color: #333; }

/* VS Code */
.code { width: 870px; height: 1039px; display: flex; flex-direction: column; color: #ccc; background: #1e1e1e; font-family: "Open Sans", "Noto Sans", sans-serif; border-left: 1px solid #0f3a57; }
.vs-title { height: 30px; flex: none; background: #3c3c3c; display: flex; align-items: center; font-size: 12px; color: #b5b5b5; padding-left: 10px; }
.vs-logo { width: 17px; height: 17px; margin-right: 17px; }
.vs-menu { margin-right: 17px; }
.vs-more { letter-spacing: 1px; margin-right: 41px; }
.vs-wintitle { color: #b0b0b0; width: 289px; flex: none; white-space: nowrap; font-size: 11.6px; }
.vs-layout { display: flex; gap: 7px; margin-left: 3px; }
.vs-layout svg { width: 15px; height: 15px; }
.vs-winctl { display: flex; margin-left: auto; gap: 33px; padding-right: 16px; }
.vs-winctl svg { width: 12px; height: 12px; }
.vs-main { flex: 1; display: flex; min-height: 0; }
.vs-activity { width: 48px; flex: none; background: #333; display: flex; flex-direction: column; }
.act { height: 48px; display: flex; align-items: center; justify-content: center; position: relative; }
.act svg { width: 23px; height: 23px; }
.act-on { box-shadow: inset 2px 0 0 #fff; }
.act-badge { position: absolute; right: 5px; bottom: 5px; width: 16px; height: 16px; border-radius: 50%; background: #007acc; color: #fff; font-size: 9px; font-weight: 700; text-align: center; line-height: 16px; }
.act-last { height: 48px; padding-top: 4px; }
.act-spacer { flex: 1; }
.act-gear { margin-bottom: 1px; }
.vs-side { width: 312px; flex: none; background: #252526; display: flex; flex-direction: column; }
.ex-head { height: 35px; flex: none; display: flex; align-items: center; justify-content: space-between; padding: 0 14px 0 20px; font-size: 10.5px; color: #bbb; }
.ex-dots { font-size: 15px; letter-spacing: 1px; color: #ccc; }
.ex-root { height: 22px; flex: none; display: flex; align-items: center; font-size: 10.5px; font-weight: 700; color: #ccc; padding-left: 5px; white-space: nowrap; }
.chev { width: 10px; height: 10px; margin-right: 5px; }
.tree { flex: 1; }
.row { height: 22px; display: flex; align-items: center; padding-left: 13px; font-size: 12.5px; color: #ccc; white-space: nowrap; position: relative; }
.ric { width: 15px; height: 15px; margin-right: 6px; }
.row-in { padding-left: 21px; }
.nest { position: relative; }
.nest::before { content: ""; position: absolute; left: 16px; top: 0; bottom: 0; width: 1px; background: #58585a; z-index: 1; }
.row-sel { background: #37373d; }
.row-mod { color: #d9b883; }
.row-dot { position: absolute; right: 17px; top: 7px; width: 8px; height: 8px; border-radius: 50%; background: #8a7a5c; }
.row-m { position: absolute; right: 16px; font-weight: 700; font-size: 12px; color: #b49a6c; }
.ex-sect { height: 22px; flex: none; border-top: 1px solid #414141; display: flex; align-items: center; font-size: 10.5px; font-weight: 700; color: #ccc; padding-left: 6px; }
.ex-sect svg { width: 10px; height: 10px; margin-right: 4px; }
.vs-editor { flex: 1; min-width: 0; display: flex; flex-direction: column; }
.vs-tabs { height: 35px; flex: none; background: #252526; display: flex; align-items: center; font-size: 12.5px; }
.vtab { width: 177px; height: 35px; background: #2d2d2d; display: flex; align-items: center; padding-left: 11px; color: #999; white-space: nowrap; flex: none; }
.vtab-ic { width: 15px; height: 15px; margin-right: 6px; }
.vtab-on { width: 122px; margin-left: 1px; background: #1e1e1e; color: #e2c08d; padding-left: 11px; }
.vtab-name { width: 50px; flex: none; }
.vtab-m { width: 20px; flex: none; font-weight: 700; font-size: 12px; color: #b49a6c; }
.vtab-x { width: 9px; height: 9px; }
.vtab-actions { margin-left: auto; display: flex; align-items: center; padding-right: 12px; gap: 10px; }
.vtab-actions svg { width: 16px; height: 16px; }
.vtab-actions .vta-small { width: 10px; height: 10px; margin-left: -4px; }
.vs-crumb { height: 22px; flex: none; display: flex; align-items: center; padding-left: 16px; font-size: 12.5px; color: #a9a9a9; }
.vc-sep { width: 9px; height: 10px; margin: 0 3px 0 4px; }
.vc-py { width: 13px; height: 13px; margin-right: 8px; }
.vs-codearea { height: 656px; flex: none; position: relative; padding-top: 1px; font-family: "Liberation Mono", monospace; font-size: 12.87px; }
.cl { height: 19.5px; display: flex; align-items: center; line-height: 19px; }
.ln { width: 42px; text-align: right; color: #858585; flex: none; }
.ln-on { color: #c6c6c6; }
.gutter { width: 3px; height: 19px; margin-left: 6px; background: repeating-linear-gradient(-45deg, #1b81a8 0 1px, #1e1e1e 1px 2px); }
.src { margin-left: 17px; white-space: pre; }
.fn { color: #dcdcaa; }
.br { color: #ffd700; }
.str { color: #ce9178; }
.ruler { position: absolute; left: 68px; top: 0; width: 372px; height: 19px; border: 1px solid #282828; }
.ov-dot { position: absolute; left: 440px; top: 0; width: 2px; height: 2px; background: #1b81a8; }
.ov-line { position: absolute; left: 448px; top: 0; width: 30px; height: 2px; background: #1d4d6b; }
.scroll-mark { position: absolute; right: 8px; top: 0; width: 5px; height: 18px; background: #1d5a85; }
.vs-panel { flex: 1; border-top: 1px solid #414141; background: #1e1e1e; padding: 0 20px; min-height: 0; }
.p-tabs { height: 35px; display: flex; align-items: center; font-size: 10.5px; color: #a2a2a2; position: relative; }
.p-tab { margin-right: 23px; line-height: 30px; height: 30px; }
.p-on { color: #e7e7e7; box-shadow: 0 1px 0 #e7e7e7; }
.p-more { letter-spacing: 1px; color: #ccc; font-size: 14px; margin-left: -3px; }
.p-icons { margin-left: auto; margin-right: -10px; display: flex; gap: 10px; }
.p-icons svg { width: 15px; height: 15px; }
.p-filter { width: 470px; height: 24px; margin-top: 9px; background: #3c3c3c; display: flex; align-items: center; justify-content: space-between; padding: 0 1px 0 5px; font-size: 11.5px; color: #a0a0a0; }
.p-filter svg { width: 15px; height: 15px; }
.p-msg { margin-top: 12px; font-size: 12.5px; line-height: 20px; color: #ccc; }
.vs-status { height: 21px; flex: none; background: #007acc; display: flex; align-items: center; font-size: 11.5px; color: #fff; white-space: nowrap; }
.vs-status svg { width: 12px; height: 12px; }
.st-remote { width: 34px; height: 21px; background: #16825d; display: flex; align-items: center; justify-content: center; }
.st { display: flex; align-items: center; gap: 3px; }
.st-branch { margin-left: 8px; width: 59px; }
.st-sync { width: 62px; gap: 7px; }
.st-err { gap: 6px; }
.st-warn { margin-left: 2px; }
.st-right { margin-left: auto; display: flex; align-items: center; gap: 16px; padding-right: 14px; }
.st-lang { display: flex; align-items: center; gap: 4px; }
.vs-status .st-ic { width: 14px; height: 14px; }

/* Taskbar */
.taskbar { height: 40px; display: flex; align-items: center; background: linear-gradient(90deg, #22363f, #203242 55%, #1f2d45); color: #fff; }
.tb-start { width: 16px; height: 16px; margin: 0 16px; }
.tb-search { width: 288px; height: 40px; background: #f3f3f3; display: flex; align-items: center; padding-left: 11px; color: #222; font-size: 14px; position: relative; overflow: hidden; }
.tb-search-ic { width: 17px; height: 17px; margin-right: 11px; }
.tb-bell { position: absolute; right: 0; top: 0; width: 60px; height: 40px; }
.tb-taskview { width: 16px; height: 16px; margin: 0 20px 0 15px; }
.tb-app { width: 48px; height: 40px; display: flex; align-items: center; justify-content: center; margin-right: 1px; box-shadow: inset 0 -2px 0 #76b9ed; }
.tb-app svg { width: 26px; height: 26px; }
.tb-app-on { background: #4c5e66; }
.chrome { width: 24px; height: 24px; border-radius: 50%; background: conic-gradient(from -30deg, #ea4335 0 120deg, #fbbc05 120deg 240deg, #34a853 240deg 360deg); display: flex; align-items: center; justify-content: center; }
.chrome-in { width: 11px; height: 11px; border-radius: 50%; background: #4285f4; box-shadow: 0 0 0 2px #fff; }
.tray { margin-left: auto; display: flex; align-items: center; }
.tr-ic { width: 14px; height: 14px; margin-right: 10px; }
.tr-g { width: 16px; height: 24px; background: #3a3f3c; display: flex; align-items: center; justify-content: center; margin: 0 9px 0 0; }
.tr-g svg { width: 12px; height: 16px; }
.tr-lang { font-size: 12px; margin: 0 11px 0 0; }
.tr-clock { display: flex; flex-direction: column; align-items: center; font-size: 12px; line-height: 18px; width: 54px; }
.tr-note { width: 17px; height: 17px; margin: 0 24px 0 18px; }
```
